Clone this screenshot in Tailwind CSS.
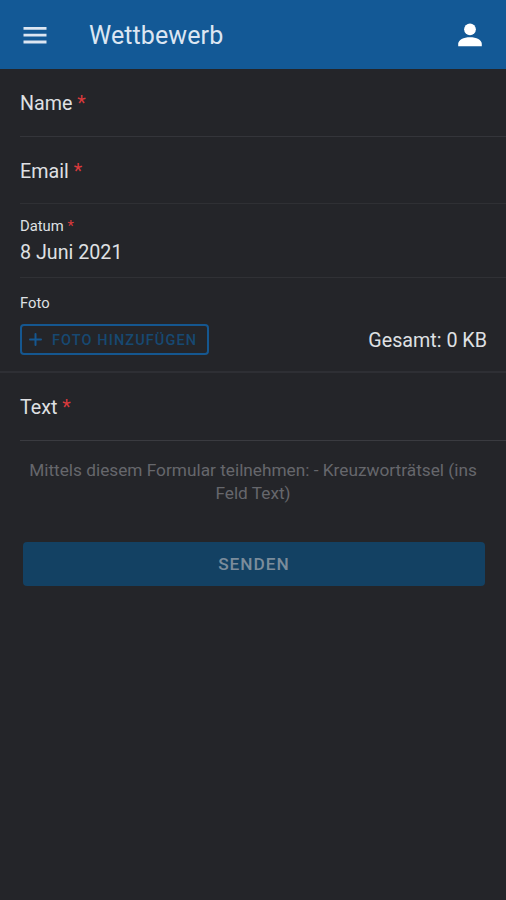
<!DOCTYPE html>
<html lang="de">
<head>
    <meta charset="UTF-8">
    <meta name="viewport" content="width=device-width, initial-scale=1.0">
    <title>Wettbewerb</title>
    <script src="https://cdn.jsdelivr.net/npm/@tailwindcss/browser@4"></script>
</head>
<body class="min-h-screen bg-[#242529] font-['Roboto',sans-serif] text-[19.7px] text-[#dfe0e3]">
    <!-- Header -->
    <header class="flex h-[69px] items-center bg-[#135996] px-5">
        <button class="size-[30px]" aria-label="Menü">
            <svg class="size-[30px]" viewBox="0 0 30 30" fill="#dce6f2"><path d="M3.5 7h23v2.8h-23zM3.5 13.8h23v2.8h-23zM3.5 20.6h23v2.8h-23z"/></svg>
        </button>
        <h1 class="ml-[39px] flex-1 pt-0.5 text-[25px] leading-8 tracking-[0.1px] text-[#dce6f2]">Wettbewerb</h1>
        <button class="mr-1 h-6 w-6" aria-label="Profil">
            <svg class="size-6" viewBox="0 0 24 24" fill="#fff"><circle cx="12" cy="6.3" r="5.9"/><path d="M0.2 23.2v-2.4C0.2 16.8 5.6 14.2 12 14.2s11.8 2.6 11.8 6.6v2.4z"/></svg>
        </button>
    </header>

    <!-- Form -->
    <form>
        <div class="ml-5 flex h-[68px] items-center border-b border-[#34353a] pt-[3px]">
            <label>Name <span class="text-[#d93a3c]">*</span></label>
        </div>
        <div class="ml-5 flex h-[67px] items-center border-b border-[#2f3034] pt-1">
            <label>Email <span class="text-[#d93a3c]">*</span></label>
        </div>
        <div class="ml-5 h-[74px] border-b border-[#303135] pt-3">
            <label class="block text-[14.8px] leading-5">Datum <span class="text-[#d93a3c]">*</span></label>
            <p class="mt-[3px] leading-7">8 Juni 2021</p>
        </div>
        <div class="h-[95px] border-b-2 border-[#2e2f34] pr-[19px] pl-5 pt-[15px]">
            <label class="block text-[14.8px] leading-5">Foto</label>
            <div class="mt-[11px] flex items-center justify-between">
                <button type="button" class="flex h-[31px] w-[189px] items-center rounded-[4px] border-2 border-[#155790] pl-[7px] text-[14.5px] font-medium whitespace-nowrap tracking-[1.1px] text-[#174972]">
                    <svg class="mr-2.5 size-[13px]" viewBox="0 0 13 13" stroke="#155790" stroke-width="2" stroke-linecap="round"><path d="M6.5 1v11M1 6.5h11"/></svg>
                    <span class="pt-0.5">FOTO HINZUFÜGEN</span>
                </button>
                <span class="pt-0.5">Gesamt: 0 KB</span>
            </div>
        </div>
        <div class="ml-5 flex h-[68px] items-center border-b border-[#3a3b40] pt-[3px]">
            <label>Text <span class="text-[#d93a3c]">*</span></label>
        </div>
        <p class="px-5 pt-[18px] pb-px text-center text-[17.25px] leading-[23px] text-[#66676c]">Mittels diesem Formular teilnehmen: - Kreuzworträtsel (ins Feld Text)</p>
        <div class="pr-[21px] pl-[23px] pt-9">
            <button type="button" class="h-11 w-full rounded-[4px] bg-[#134163] pt-0.5 text-[17.25px] font-medium tracking-[1px] text-[#7b8c9b]">SENDEN</button>
        </div>
    </form>
</body>
</html>
